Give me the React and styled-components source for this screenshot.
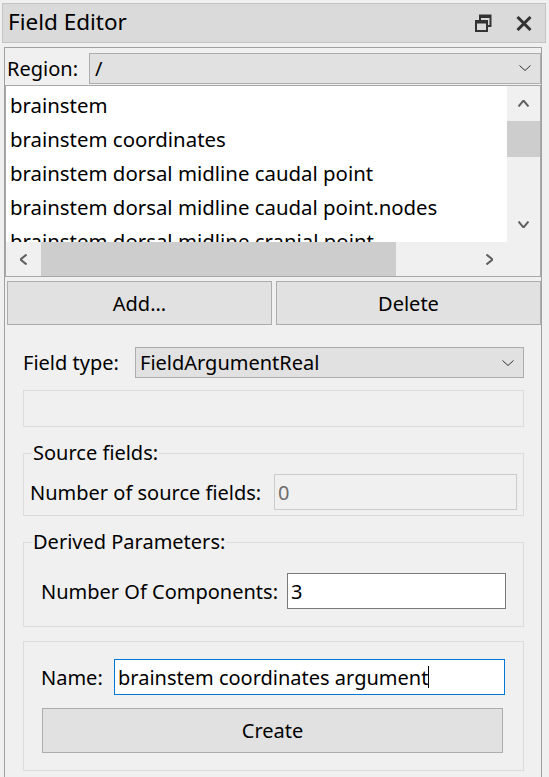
import React from 'react';
import styled, { createGlobalStyle } from 'styled-components';

const GlobalStyle = createGlobalStyle`
  html, body {
    margin: 0;
    padding: 0;
    background: #f0f0f0;
  }
  body {
    font-family: "Noto Sans", "Open Sans", sans-serif;
    font-size: 20px;
    color: #000;
    overflow: hidden;
  }
`;

const Window = styled.div`
  width: 549px;
  height: 777px;
  box-sizing: border-box;
  padding-top: 3px;
  overflow: hidden;
  background: #f0f0f0;
`;

const TitleBar = styled.div`
  display: flex;
  align-items: center;
  justify-content: space-between;
  box-sizing: border-box;
  margin-left: 2px;
  width: 544px;
  height: 40px;
  padding: 0 13px 0 5px;
  background: #dadada;
  border: 1px solid #c4c4c4;
`;

const Title = styled.span`
  font-size: 22.5px;
  line-height: 38px;
  padding-bottom: 2px;
`;

const TitleButtons = styled.div`
  display: flex;
  align-items: center;
  gap: 24px;
`;

const DockFrame = styled.div`
  box-sizing: border-box;
  margin: 4px 0 0 4px;
  width: 538px;
  height: 730px;
  border: 1px solid #a0a0a0;
  border-bottom: none;
`;

const RegionRow = styled.div`
  display: flex;
  align-items: center;
  height: 37px;
  padding: 3px 0 0 2px;
  box-sizing: border-box;
  margin-bottom: 0;
`;

const FormLabel = styled.span`
  flex: 0 0 ${p => p.$width}px;
  white-space: nowrap;
`;

const ComboBox = styled.div`
  display: flex;
  align-items: center;
  justify-content: space-between;
  box-sizing: border-box;
  flex: 1;
  height: 31px;
  padding: 0 9px 0 ${p => p.$indent || 5}px;
  background: #e1e1e1;
  border: 1px solid #adadad;
`;

const ListBox = styled.div`
  display: grid;
  grid-template-columns: 1fr 33px;
  grid-template-rows: 156px 34px;
  box-sizing: border-box;
  margin-left: 0;
  width: 536px;
  height: 192px;
  border: 1px solid #a8a8a8;
`;

const ListViewport = styled.div`
  background: #fff;
  overflow: hidden;
  padding: 2px 0 0 4px;
  box-sizing: border-box;
`;

const ListItem = styled.div`
  font-size: 20.4px;
  line-height: 34px;
  height: 34px;
  white-space: nowrap;
`;

const VScroll = styled.div`
  display: flex;
  flex-direction: column;
  background: #f0f0f0;
`;

const HScroll = styled.div`
  display: flex;
  background: #f0f0f0;
`;

const ArrowButton = styled.div`
  display: flex;
  align-items: center;
  justify-content: center;
  flex: 0 0 ${p => p.$size}px;
`;

const Track = styled.div`
  flex: 1;
  display: flex;
  flex-direction: ${p => (p.$vertical ? 'column' : 'row')};
`;

const Thumb = styled.div`
  background: #cdcdcd;
  flex: 0 0 auto;
`;

const Corner = styled.div`
  background: #f0f0f0;
`;

const ButtonRow = styled.div`
  display: flex;
  gap: 4px;
  padding-left: 2px;
  margin-top: 4px;
`;

const PushButton = styled.div`
  display: flex;
  align-items: center;
  justify-content: center;
  box-sizing: border-box;
  width: ${p => p.$width}px;
  height: ${p => p.$height}px;
  margin-left: ${p => p.$offset || 0}px;
  background: #e1e1e1;
  border: 1px solid #adadad;
`;

const Content = styled.div`
  padding: 22px 17px 0 18px;
`;

const FormRow = styled.div`
  display: flex;
  align-items: center;
`;

const EmptyBox = styled.div`
  box-sizing: border-box;
  height: 37px;
  margin-top: 12px;
  border: 1px solid #dcdcdc;
`;

const GroupBox = styled.fieldset`
  margin: 14px 0 0;
  padding: 0;
  min-width: 0;
  border: 1px solid #dcdcdc;
`;

const GroupTitle = styled.legend`
  margin-left: 8px;
  padding: 0 1px;
  line-height: 24px;
`;

const GroupBody = styled.div`
  padding: ${p => p.$pad};
`;

const LineEdit = styled.div`
  display: flex;
  align-items: center;
  box-sizing: border-box;
  flex: 0 0 ${p => p.$width}px;
  height: 36px;
  padding-left: 3px;
  background: ${p => (p.$disabled ? '#f0f0f0' : '#fff')};
  color: ${p => (p.$disabled ? '#6d6d6d' : '#000')};
  border: 1px solid
    ${p => (p.$focused ? '#0078d7' : p.$disabled ? '#cccccc' : '#7a7a7a')};
  white-space: nowrap;
`;

const Caret = styled.span`
  display: inline-block;
  width: 1px;
  height: 22px;
  background: #000;
  margin-left: 0;
`;

const Chevron = ({ dir = 'down', w = 12, h = 6, sw = 1, color = '#333' }) => {
  const paths = {
    down: `M0.5 0.5 L${w / 2} ${h - 0.5} L${w - 0.5} 0.5`,
    up: `M0.5 ${h - 0.5} L${w / 2} 0.5 L${w - 0.5} ${h - 0.5}`,
    left: `M${w - 0.5} 0.5 L0.5 ${h / 2} L${w - 0.5} ${h - 0.5}`,
    right: `M0.5 0.5 L${w - 0.5} ${h / 2} L0.5 ${h - 0.5}`,
  };
  return (
    <svg width={w} height={h} viewBox={`0 0 ${w} ${h}`} style={{ display: 'block' }}>
      <path d={paths[dir]} fill="none" stroke={color} strokeWidth={sw} />
    </svg>
  );
};

const FloatIcon = () => (
  <svg width="17" height="18" viewBox="0 0 17 18" style={{ display: 'block' }}>
    <path d="M5 6V1.5h10.5V12H12" fill="none" stroke="#333" strokeWidth="2" />
    <path d="M5 2.5h10.5" stroke="#333" strokeWidth="3" />
    <rect x="1" y="7" width="11" height="10" fill="none" stroke="#333" strokeWidth="2" />
    <path d="M1 8h11" stroke="#333" strokeWidth="3" />
  </svg>
);

const CloseIcon = () => (
  <svg width="16" height="15" viewBox="0 0 16 15" style={{ display: 'block' }}>
    <path d="M1.5 1 L14.5 14 M14.5 1 L1.5 14" stroke="#333" strokeWidth="3" fill="none" />
  </svg>
);

const fields = [
  'brainstem',
  'brainstem coordinates',
  'brainstem dorsal midline caudal point',
  'brainstem dorsal midline caudal point.nodes',
  'brainstem dorsal midline cranial point',
];

export default function App() {
  return (
    <Window>
      <GlobalStyle />
      <TitleBar>
        <Title>Field Editor</Title>
        <TitleButtons>
          <FloatIcon />
          <CloseIcon />
        </TitleButtons>
      </TitleBar>

      <DockFrame>
        <RegionRow>
          <FormLabel $width={82}>Region:</FormLabel>
          <ComboBox $indent={5}>
            <span>/</span>
            <Chevron />
          </ComboBox>
        </RegionRow>

        <ListBox>
          <ListViewport>
            {fields.map(f => (
              <ListItem key={f}>{f}</ListItem>
            ))}
          </ListViewport>
          <VScroll>
            <ArrowButton $size={35}>
              <Chevron dir="up" w={11} h={7} sw={2} color="#606060" />
            </ArrowButton>
            <Track $vertical>
              <Thumb style={{ height: 36 }} />
            </Track>
            <ArrowButton $size={35}>
              <Chevron dir="down" w={11} h={7} sw={2} color="#606060" />
            </ArrowButton>
          </VScroll>
          <HScroll>
            <ArrowButton $size={35}>
              <Chevron dir="left" w={7} h={11} sw={2} color="#606060" />
            </ArrowButton>
            <Track>
              <Thumb style={{ width: 355 }} />
            </Track>
            <ArrowButton $size={35}>
              <Chevron dir="right" w={7} h={11} sw={2} color="#606060" />
            </ArrowButton>
          </HScroll>
          <Corner />
        </ListBox>

        <ButtonRow>
          <PushButton $width={265} $height={44}>Add...</PushButton>
          <PushButton $width={265} $height={44}>Delete</PushButton>
        </ButtonRow>

        <Content>
          <FormRow>
            <FormLabel $width={112}>Field type:</FormLabel>
            <ComboBox $indent={4}>
              <span>FieldArgumentReal</span>
              <Chevron />
            </ComboBox>
          </FormRow>

          <EmptyBox />

          <GroupBox>
            <GroupTitle>Source fields:</GroupTitle>
            <GroupBody $pad="9px 6px 5px 6px">
              <FormRow>
                <FormLabel $width={244}>Number of source fields:</FormLabel>
                <LineEdit $width={243} $disabled>0</LineEdit>
              </FormRow>
            </GroupBody>
          </GroupBox>

          <GroupBox>
            <GroupTitle>Derived Parameters:</GroupTitle>
            <GroupBody $pad="19px 17px 17px 17px">
              <FormRow>
                <FormLabel $width={246}>Number Of Components:</FormLabel>
                <LineEdit $width={219}>3</LineEdit>
              </FormRow>
            </GroupBody>
          </GroupBox>

          <GroupBox>
            <GroupBody $pad="17px 17px 17px 17px">
              <FormRow>
                <FormLabel $width={73}>Name:</FormLabel>
                <LineEdit $width={391} $focused>
                  brainstem coordinates argument
                  <Caret />
                </LineEdit>
              </FormRow>
              <PushButton $width={461} $height={45} $offset={1} style={{ marginTop: 13 }}>
                Create
              </PushButton>
            </GroupBody>
          </GroupBox>
        </Content>
      </DockFrame>
    </Window>
  );
}
